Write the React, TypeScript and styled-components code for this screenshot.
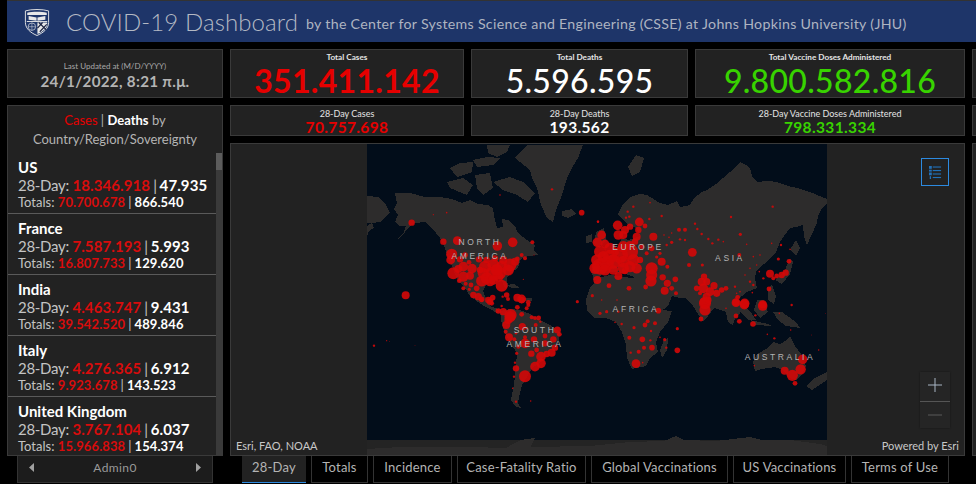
import React from "react";
import styled, { createGlobalStyle } from "styled-components";

const Global = createGlobalStyle`
  html, body { margin: 0; padding: 0; background: #000; overflow: hidden; }
  * { box-sizing: border-box; }
`;

const RED = "#e60000";
const GREEN = "#38d300";
const FONT = `Lato, "Noto Sans", "Liberation Sans", sans-serif`;

const Page = styled.div`
  width: 976px;
  height: 484px;
  overflow: hidden;
  background: #000;
  font-family: ${FONT};
  color: #bdbdbd;
`;

const Header = styled.header`
  height: 42px;
  margin-left: 7px;
  padding: 0 0 1px 17px;
  background: #1e3569;
  border-top: 1px solid #333;
  display: flex;
  align-items: center;
`;

const Title = styled.h1`
  margin: 0 0 0 16px;
  font-size: 24px;
  font-weight: 300;
  color: #b4b9c4;
  white-space: nowrap;
  letter-spacing: 0.1px;
`;

const Subtitle = styled.span`
  margin-left: 8px;
  padding-top: 4px;
  font-size: 14.2px;
  font-weight: 400;
  color: #aeb4c1;
  white-space: nowrap;
  letter-spacing: 0.3px;
`;

const Board = styled.main`
  display: grid;
  grid-template-columns: 216px 234px 217px 270px 20px;
  grid-template-rows: 49px 31px 313px;
  gap: 7px;
  margin: 7px 0 0 7px;
`;

const Card = styled.section`
  background: #222;
  border: 1px solid #3a3a3a;
  overflow: hidden;
  min-width: 0;
`;

const UpdatedCard = styled(Card)`
  display: flex;
  flex-direction: column;
  align-items: center;
  padding-top: 11px;
`;

const UpdatedLabel = styled.div`
  font-size: 8px;
  color: #a8a8a8;
  line-height: 11px;
`;

const UpdatedValue = styled.div`
  font-size: 15.2px;
  font-weight: 700;
  line-height: 19px;
  color: #b4b4b4;
  letter-spacing: 0.3px;
`;

const StatCard = styled(Card)`
  display: flex;
  flex-direction: column;
  align-items: center;
`;

const StatLabel = styled.div<{ $small?: boolean }>`
  font-size: ${(p) => (p.$small ? "9px" : "8.2px")};
  font-weight: ${(p) => (p.$small ? 400 : 700)};
  line-height: 11px;
  margin-top: 2px;
  color: #e4e4e4;
  white-space: nowrap;
`;

const BigValue = styled.div<{ $color: string; $weight?: number }>`
  margin-top: 1px;
  font-size: 32px;
  font-weight: ${(p) => p.$weight ?? 500};
  line-height: 33px;
  color: ${(p) => p.$color};
  white-space: nowrap;
  letter-spacing: 0.3px;
`;

const SmallValue = styled.div<{ $color: string }>`
  margin-top: 1px;
  font-size: 15.5px;
  font-weight: 700;
  line-height: 15px;
  color: ${(p) => p.$color};
  white-space: nowrap;
  letter-spacing: 0.35px;
`;

const StripCard = styled(Card)`
  grid-column: 5;
`;

const ListCard = styled(Card)`
  grid-column: 1;
  grid-row: 2 / span 2;
  display: flex;
  flex-direction: column;
`;

const ListTitle = styled.div`
  flex: none;
  height: 47px;
  padding-top: 5px;
  font-size: 13px;
  line-height: 19px;
  text-align: center;
  color: #b4b4b4;
`;

const CasesWord = styled.span`
  color: ${RED};
`;
const DeathsWord = styled.span`
  color: #fff;
  font-weight: 700;
`;

const ListScroll = styled.div`
  flex: 1;
  min-height: 0;
  display: flex;
`;

const RowList = styled.div`
  flex: 1;
  min-width: 0;
  overflow: hidden;
`;

const Scrollbar = styled.div`
  flex: none;
  width: 6px;
  background: #3a3a3a;
`;

const ScrollThumb = styled.div`
  height: 17px;
  background: #5c5c5c;
`;

const Row = styled.article`
  height: 61px;
  padding: 5px 0 0 10px;
  border-bottom: 1px solid #5a5a5a;
  white-space: nowrap;
`;

const Place = styled.div`
  font-size: 15px;
  font-weight: 700;
  line-height: 18px;
  color: #fff;
`;

const DayLine = styled.div`
  font-size: 15px;
  line-height: 18px;
  color: #c4c4c4;
  letter-spacing: -0.3px;
`;

const TotalLine = styled.div`
  font-size: 13px;
  line-height: 16px;
  color: #c4c4c4;
`;

const RedNum = styled.span`
  color: #d80c0c;
  font-weight: 700;
  letter-spacing: 0.1px;
`;

const WhiteNum = styled.span`
  color: #fff;
  font-weight: 700;
  letter-spacing: 0.1px;
`;

const Pipe = styled.span`
  margin: 0 3px;
  color: #c4c4c4;
`;

const MapCard = styled(Card)`
  grid-column: 2 / span 3;
  position: relative;
`;

const MapSvg = styled.svg`
  display: block;
  width: 100%;
  height: 100%;
`;

const MapLabel = styled.text`
  font-family: "Liberation Sans", sans-serif;
  font-size: 8.5px;
  letter-spacing: 2.6px;
  fill: #b4b4b4;
  text-anchor: middle;
`;

const Credit = styled.div<{ $right?: boolean }>`
  position: absolute;
  bottom: 3px;
  ${(p) => (p.$right ? "right: 5px;" : "left: 5px;")}
  font-size: 11px;
  line-height: 13px;
  color: #c8c8c8;
`;

const LegendButton = styled.div`
  position: absolute;
  top: 14px;
  right: 15px;
  width: 28px;
  height: 28px;
  border: 1px solid #2c8ae0;
  display: flex;
  align-items: center;
  justify-content: center;
`;

const ZoomGroup = styled.div`
  position: absolute;
  top: 228px;
  right: 14px;
  width: 30px;
  height: 56px;
  background: #252525;
  display: flex;
  flex-direction: column;
  box-shadow: 0 0 2px rgba(0, 0, 0, 0.4);
`;

const ZoomButton = styled.div<{ $dim?: boolean }>`
  flex: 1;
  display: flex;
  align-items: center;
  justify-content: center;
  padding-bottom: ${(p) => (p.$dim ? "0" : "3px")};
  color: ${(p) => (p.$dim ? "#5a5a5a" : "#a9b6c4")};
  & + & {
    border-top: 1px solid #555;
  }
`;

const Footer = styled.nav`
  display: flex;
  height: 28px;
  padding-left: 17px;
`;

const AdminTab = styled.div`
  width: 196px;
  height: 27px;
  border: 1px solid #333;
  border-top: none;
  background: #1c1c1c;
  display: flex;
  align-items: center;
  justify-content: space-between;
  padding: 0 11px 4px;
  font-size: 12px;
  color: #9a9a9a;
  letter-spacing: 0.4px;
`;

const TabStrip = styled.div`
  display: flex;
  gap: 5px;
  margin-left: 29px;
`;

const Tab = styled.div<{ $active?: boolean; $w: number }>`
  width: ${(p) => p.$w}px;
  height: 27px;
  padding-bottom: 4px;
  display: flex;
  align-items: center;
  justify-content: center;
  font-size: 13px;
  letter-spacing: 0.2px;
  color: #b4b4b4;
  white-space: nowrap;
  background: ${(p) => (p.$active ? "#222" : "#000")};
  border: 1px solid #333;
  border-top: none;
  ${(p) => p.$active && "border: none; border-bottom: 1px solid #2c8ae0;"}
`;

type Pt = [number, number, number];
const dots = (ox: number, oy: number, pts: Pt[]) =>
  pts.map(([x, y, r]) => [ox + x / 3, oy + y / 3, (r * 1.2) / 3] as Pt);

const DOTS: Pt[] = [
  ...dots(360, 145, [
    [155,233,8],[250,290,8],[292,287,11],[412,303,12],[458,292,12],[517,292,5],[275,328,14],[272,345,11],[300,343,8],[327,352,6],[357,343,8],[315,330,7],[280,385,15],[295,372,10],[310,365,12],[336,371,12],[310,395,13],[330,392,10],[298,407,6],[317,416,5],[333,420,6],[310,430,5],[328,433,4],[137,451,10],
    [375,365,15],[400,360,15],[425,365,15],[450,360,16],[465,350,10],[370,385,14],[395,385,16],[420,385,15],[445,375,14],[365,408,14],[390,408,13],[415,395,13],[425,422,15],[472,342,6],[485,330,5],[495,340,5],
    [380,345,8],[405,340,8],[430,345,10],[360,375,8],[410,375,15],[380,400,15],[400,405,12],
    [350,430,7],[340,450,8],[355,455,9],[365,463,7],[385,465,8],[398,458,7],[440,450,7],[444,462,5],[428,455,3],[472,458,10],[485,462,11],[505,472,6],[395,475,6],
    [665,203,7],[576,133,3],[714,230,3],[652,470,4],[420,150,2],[260,203,2],[220,209,1.5],[490,403,1.5],[522,330,1.5],
  ]),
  ...dots(590, 145, [
    [83,241,12],[148,231,11],[120,245,8],[105,255,10],[85,270,12],[100,270,10],[35,270,11],[22,292,12],[45,297,11],[145,255,8],[140,275,10],[135,290,8],[190,275,10],[165,243,6],[130,185,3],[113,200,3],[118,215,3],[108,218,3],[24,230,3],[180,173,2],[215,213,3],[178,222,3],[60,335,17],[30,365,20],[20,345,14],[90,330,20],[120,320,20],[100,350,15],[50,355,18],[130,345,15],[140,370,13],[105,378,8],[75,320,10],[155,305,6],[185,310,7],[170,325,5],[215,350,10],[185,370,15],[185,390,14],[183,408,14],[22,405,10],[85,393,10],[218,397,8],[256,403,7],[232,415,9],[224,437,10],[245,430,6],[258,445,5],[117,430,6],[57,422,6],[167,426,6],[7,452,4],[35,465,2],[81,465,2],[307,322,11],[297,360,5],[337,360,4],[232,365,5],[200,336,4],[210,325,4],[230,300,3],[245,292,4],[267,254,5],[285,254,5],[245,264,2],[222,270,2],[237,277,2],[270,283,3],[285,285,3],[315,236,3],[322,252,3],[335,267,3],[355,282,3],[367,295,3],[385,284,3],[400,290,2],[451,268,4],[423,216,3],[548,185,3],[448,330,5],[470,298,2],[490,335,2],[510,330,2],[545,295,2],[573,300,3],[600,313,2],[565,342,4],[597,349,6],[540,386,10],[560,393,6],[575,390,8],[587,383,8],[550,400,5],[537,432,6],[480,370,2],[465,390,2],[480,410,3],[490,420,3],[520,400,3],[500,360,2],[508,380,2],[435,425,3],[450,440,2],[487,443,2],
    [30,320,15],[60,310,14],[100,305,14],[120,300,10],[70,350,18],[100,370,14],[120,365,14],[40,335,14],[15,370,14],[45,375,14],[70,375,12],[150,345,8],
    [342,395,8],[335,410,10],[350,410,9],[372,422,9],[320,430,7],[340,430,12],[360,440,11],[380,445,9],[395,435,7],[408,430,6],[350,455,10],[345,472,14],[355,465,8],[330,445,5],[443,457,6],[438,472,9],[464,475,12],[518,478,10],[440,445,2],
  ]),
  ...dots(590, 300, [
    [345,10,15],[345,30,14],[438,8,11],[463,14,12],[518,18,12],[333,57,6],[605,15,3],[408,25,2],[438,48,6],[448,64,6],[489,72,7],[496,46,3],[568,40,2],[602,90,2],[532,103,2],[553,115,3],[664,105,1],[686,150,2],[707,40,1],
    [205,32,7],[30,40,4],[50,35,4],[85,35,3],[95,72,3],[75,67,2],[262,86,4],[173,64,5],[195,70,5],[165,75,6],[183,93,3],[132,83,4],[118,113,5],[157,118,7],[181,121,3],[186,143,7],[162,143,5],[146,155,5],[122,158,3],[138,191,11],[158,188,2],[224,119,4],[210,112,2],[229,143,3],[262,151,7],[493,197,2],
    [638,178,12],[632,208,13],[607,226,14],[584,212,10],[615,250,6],
  ]),
  ...dots(360, 300, [
    [452,45,15],[445,60,10],[450,50,14],[439,75,10],[415,33,7],[430,35,9],[472,22,6],[485,43,6],[515,52,5],[525,54,5],[536,54,6],[541,65,3],[527,75,5],[487,80,9],[500,85,3],[468,100,3],[447,112,10],[437,95,5],[463,118,5],[495,112,5],[522,118,8],[555,108,6],[580,118,8],[592,90,9],[598,103,6],[495,130,12],[475,140,5],[530,150,6],[514,161,8],[470,160,4],[543,170,12],[560,162,8],[575,158,10],[585,143,8],[555,130,8],[543,190,12],[525,200,12],[495,229,15],[468,205,8],[465,188,3],[462,230,3],[458,265,2],[468,305,3],[512,303,2],[42,137,3],[80,122,1.5],[88,124,1],[165,137,1],[390,5,8],[365,0,5],[485,0,8],[505,15,5],[500,25,5],[425,18,3],
  ]),
];

const LAND = [
  // North and Central America
  "395,193 410,193 425,197 440,197 452,199 462,203 470,200 478,204 488,205 493,208 494,216 497,228 503,227 502,219 508,220 515,226 518,233 527,240 535,245 534,250 538,255 528,256 521,259 518,268 512,272 507,278 508,287 505,288 501,279 492,280 486,285 483,291 487,301 494,298 493,303 489,306 496,308 500,311 497,313 490,309 484,306 478,302 470,296 465,288 458,280 455,274 452,266 448,258 445,248 440,238 433,229 425,222 415,223 408,228 403,235 398,239 404,232 406,226 399,226 395,222 398,215 394,209 397,203",
  // South America
  "500,311 510,309 520,310 530,314 540,320 550,325 560,332 559,340 555,348 546,352 540,363 532,368 527,377 522,385 520,393 518,403 521,408 516,407 511,400 513,390 515,377 516,365 517,353 510,343 505,333 502,325",
  // Greenland
  "515,158 522,150 527,145 583,145 578,158 572,168 567,178 562,195 556,210 553,222 547,218 541,205 537,188 532,178 530,170",
  // Arctic islands
  "487,145 510,145 507,152 497,157 488,153",
  "450,168 460,163 473,162 472,172 457,177",
  "473,160 487,157 500,158 493,165 477,167",
  "447,182 463,178 473,185 467,195 450,188",
  "475,175 490,173 493,188 483,195 477,188",
  "493,182 510,177 523,182 535,193 528,202 517,195 503,190",
  // Eurasia
  "593,280 592,270 598,260 607,259 613,252 618,246 622,238 628,240 640,236 636,228 627,224 618,214 622,206 630,197 640,194 647,195 655,200 660,203 668,205 677,201 680,207 690,205 694,198 702,192 707,190 716,184 723,178 730,172 737,165 740,162 746,165 750,168 752,176 757,182 768,181 777,182 788,186 797,188 810,192 827,199 827,204 822,208 818,216 817,223 812,234 807,245 804,236 803,225 796,227 790,228 784,236 780,242 776,252 770,258 764,264 760,267 756,272 755,278 757,288 752,290 747,292 742,296 737,298 742,308 740,314 735,318 733,325 728,322 726,312 720,310 714,308 708,316 703,322 698,314 692,304 685,298 680,298 672,296 668,306 660,312 654,302 650,292 644,286 640,282 632,276 622,273 612,272 602,274 598,280",
  // Africa
  "586,300 590,288 598,278 610,275 625,277 638,279 648,284 652,290 657,300 662,310 672,311 668,322 660,332 656,342 658,352 650,358 646,366 632,369 627,358 626,345 622,332 616,322 606,318 594,318 587,310",
  // Australia
  "753,362 757,354 768,348 773,342 780,344 787,340 790,336 795,346 801,354 806,366 802,374 796,380 789,378 783,370 775,367 762,369 755,371",
  // Islands
  "664,340 668,338 667,350 662,358 660,350",
  "596,232 604,228 606,240 600,248 594,244",
  "586,236 592,234 592,242 586,243",
  "562,211 572,209 576,214 568,218 562,216",
  "735,300 745,306 752,314 756,320 749,320 740,312",
  "750,320 768,324 772,326 756,325",
  "757,300 764,300 768,312 760,318 754,310",
  "768,290 772,284 776,296 774,304 768,300",
  "775,280 785,270 790,258 793,262 790,274 782,284",
  "790,250 796,240 800,248 796,256",
  "773,312 782,312 796,322 800,328 786,326 778,320",
  "806,386 815,378 827,372 827,380 818,386 812,390",
  "367,196 378,197 386,205 390,213 380,222 372,223 367,223",
  "367,226 372,223 374,228 369,231 367,236",
  "506,285 514,284 520,288 512,288",
  "522,298 532,298 532,301 522,301",
  "628,167 636,155 644,158 640,172 632,176",
  "520,440 535,438 527,454 518,456",
];

const ANTARCTIC =
  "367,456 367,449 400,447 470,447 506,448 515,443 522,440 530,447 590,446 630,442 664,441 676,436 684,440 716,441 750,437 762,440 790,440 820,444 827,446 827,456";

const WorldMap = () => (
  <MapSvg viewBox="231 144 733 311" preserveAspectRatio="none">
    <defs>
      <clipPath id="mapClip">
        <rect x="367" y="144" width="460" height="311" />
      </clipPath>
    </defs>
    <rect x="367" y="144" width="460" height="296" fill="#020d1a" />
    <rect x="367" y="440" width="460" height="15" fill="#242424" />
    <g clipPath="url(#mapClip)">
      <g fill="#2d2c2c" shapeRendering="crispEdges">
        {LAND.map((p) => (
          <polygon key={p} points={p} />
        ))}
        <polygon points={ANTARCTIC} />
      </g>
      <g fill="#d40808" fillOpacity={0.9}>
        {DOTS.map(([x, y, r], i) => (
          <circle key={i} cx={x} cy={y} r={r} />
        ))}
      </g>
    </g>
    <MapLabel x="480" y="245">NORTH</MapLabel>
    <MapLabel x="480" y="259">AMERICA</MapLabel>
    <MapLabel x="638" y="250">EUROPE</MapLabel>
    <MapLabel x="730" y="261">ASIA</MapLabel>
    <MapLabel x="535" y="333">SOUTH</MapLabel>
    <MapLabel x="535" y="347">AMERICA</MapLabel>
    <MapLabel x="636" y="312">AFRICA</MapLabel>
    <MapLabel x="780" y="360">AUSTRALIA</MapLabel>
  </MapSvg>
);

const Shield = () => (
  <svg width="26" height="29" viewBox="0 0 28 30" style={{ flex: "none", marginTop: 2 }}>
    <path d="M1.5 2.5 C8 0.5 20 0.5 26.5 2.5 L26.5 15 C26.5 22 20 26.5 14 29 C8 26.5 1.5 22 1.5 15 Z" fill="#1e3569" stroke="#e8e8e8" strokeWidth="1" />
    <path d="M3.5 4.5 C9 3 19 3 24.5 4.5 L24.5 7 L3.5 7 Z" fill="#e8e8e8" />
    <path d="M5 8 L13.5 9.5 L13.5 13 L5 12 Z M23 8 L14.5 9.5 L14.5 13 L23 12 Z" fill="#e8e8e8" />
    <rect x="3" y="13.4" width="22" height="1" fill="#e8e8e8" />
    <circle cx="8.5" cy="19.5" r="4" fill="none" stroke="#cfd3dc" strokeWidth="0.8" />
    <path d="M4.5 19.5 H12.5 M8.5 15.5 V23.5" stroke="#cfd3dc" strokeWidth="0.6" />
    <path d="M14.5 15 H25 V16.5 C25 21 20 25 14.5 27.5 Z" fill="#e8e8e8" />
    <path d="M16 15 L24 23 M20 15 L14.5 21 M24.5 17 L17 25" stroke="#1a2140" strokeWidth="1.3" />
  </svg>
);

const ListIcon = () => (
  <svg width="13" height="13" viewBox="0 0 14 14">
    <g fill="#2170b8">
      <rect x="0" y="0" width="3" height="3" />
      <rect x="0" y="4" width="3" height="2" />
      <rect x="0" y="7" width="3" height="3" />
      <rect x="0.8" y="11" width="1.4" height="3" />
      <rect x="4" y="0.5" width="9" height="1.2" />
      <rect x="4" y="4.3" width="9" height="1.2" />
      <rect x="4" y="8" width="9" height="1.2" />
      <rect x="4" y="11.8" width="9" height="1.2" />
    </g>
  </svg>
);

const Arrow = ({ left }: { left?: boolean }) => (
  <svg width="5" height="9" viewBox="0 0 5 9">
    <polygon points={left ? "5,0 0,4.5 5,9" : "0,0 5,4.5 0,9"} fill="#a0a0a0" />
  </svg>
);

const ROWS = [
  ["US", "18.346.918", "47.935", "70.700.678", "866.540"],
  ["France", "7.587.193", "5.993", "16.807.733", "129.620"],
  ["India", "4.463.747", "9.431", "39.542.520", "489.846"],
  ["Italy", "4.276.365", "6.912", "9.923.678", "143.523"],
  ["United Kingdom", "3.767.104", "6.037", "15.966.838", "154.374"],
];

const TABS: [string, number][] = [
  ["28-Day", 64],
  ["Totals", 57],
  ["Incidence", 79],
  ["Case-Fatality Ratio", 129],
  ["Global Vaccinations", 137],
  ["US Vaccinations", 113],
  ["Terms of Use", 98],
];

export default function App() {
  return (
    <Page>
      <Global />
      <Header>
        <Shield />
        <Title>COVID-19 Dashboard</Title>
        <Subtitle>by the Center for Systems Science and Engineering (CSSE) at Johns Hopkins University (JHU)</Subtitle>
      </Header>
      <Board>
        <UpdatedCard>
          <UpdatedLabel>Last Updated at (M/D/YYYY)</UpdatedLabel>
          <UpdatedValue>24/1/2022, 8:21 π.μ.</UpdatedValue>
        </UpdatedCard>
        <StatCard>
          <StatLabel>Total Cases</StatLabel>
          <BigValue $color={RED} $weight={700}>351.411.142</BigValue>
        </StatCard>
        <StatCard>
          <StatLabel>Total Deaths</StatLabel>
          <BigValue $color="#fff">5.596.595</BigValue>
        </StatCard>
        <StatCard>
          <StatLabel>Total Vaccine Doses Administered</StatLabel>
          <BigValue $color={GREEN}>9.800.582.816</BigValue>
        </StatCard>
        <StripCard />
        <ListCard>
          <ListTitle>
            <CasesWord>Cases</CasesWord> | <DeathsWord>Deaths</DeathsWord> by
            <br />
            Country/Region/Sovereignty
          </ListTitle>
          <ListScroll>
            <RowList>
              {ROWS.map(([name, d1, d2, t1, t2]) => (
                <Row key={name}>
                  <Place>{name}</Place>
                  <DayLine>
                    28-Day: <RedNum>{d1}</RedNum>
                    <Pipe>|</Pipe>
                    <WhiteNum>{d2}</WhiteNum>
                  </DayLine>
                  <TotalLine>
                    Totals: <RedNum>{t1}</RedNum>
                    <Pipe>|</Pipe>
                    <WhiteNum>{t2}</WhiteNum>
                  </TotalLine>
                </Row>
              ))}
            </RowList>
            <Scrollbar>
              <ScrollThumb />
            </Scrollbar>
          </ListScroll>
        </ListCard>
        <StatCard>
          <StatLabel $small>28-Day Cases</StatLabel>
          <SmallValue $color={RED}>70.757.698</SmallValue>
        </StatCard>
        <StatCard>
          <StatLabel $small>28-Day Deaths</StatLabel>
          <SmallValue $color="#fff">193.562</SmallValue>
        </StatCard>
        <StatCard>
          <StatLabel $small>28-Day Vaccine Doses Administered</StatLabel>
          <SmallValue $color={GREEN}>798.331.334</SmallValue>
        </StatCard>
        <StripCard />
        <MapCard>
          <WorldMap />
          <LegendButton>
            <ListIcon />
          </LegendButton>
          <ZoomGroup>
            <ZoomButton>
              <svg width="14" height="14" viewBox="0 0 14 14">
                <path d="M0 7 H14 M7 0 V14" stroke="currentColor" strokeWidth="1" />
              </svg>
            </ZoomButton>
            <ZoomButton $dim>
              <svg width="14" height="14" viewBox="0 0 14 14">
                <path d="M0 7 H14" stroke="currentColor" strokeWidth="1" />
              </svg>
            </ZoomButton>
          </ZoomGroup>
          <Credit>Esri, FAO, NOAA</Credit>
          <Credit $right>Powered by Esri</Credit>
        </MapCard>
        <StripCard />
      </Board>
      <Footer>
        <AdminTab>
          <Arrow left />
          Admin0
          <Arrow />
        </AdminTab>
        <TabStrip>
          {TABS.map(([label, w], i) => (
            <Tab key={label} $w={w} $active={i === 0}>
              {label}
            </Tab>
          ))}
        </TabStrip>
      </Footer>
    </Page>
  );
}
